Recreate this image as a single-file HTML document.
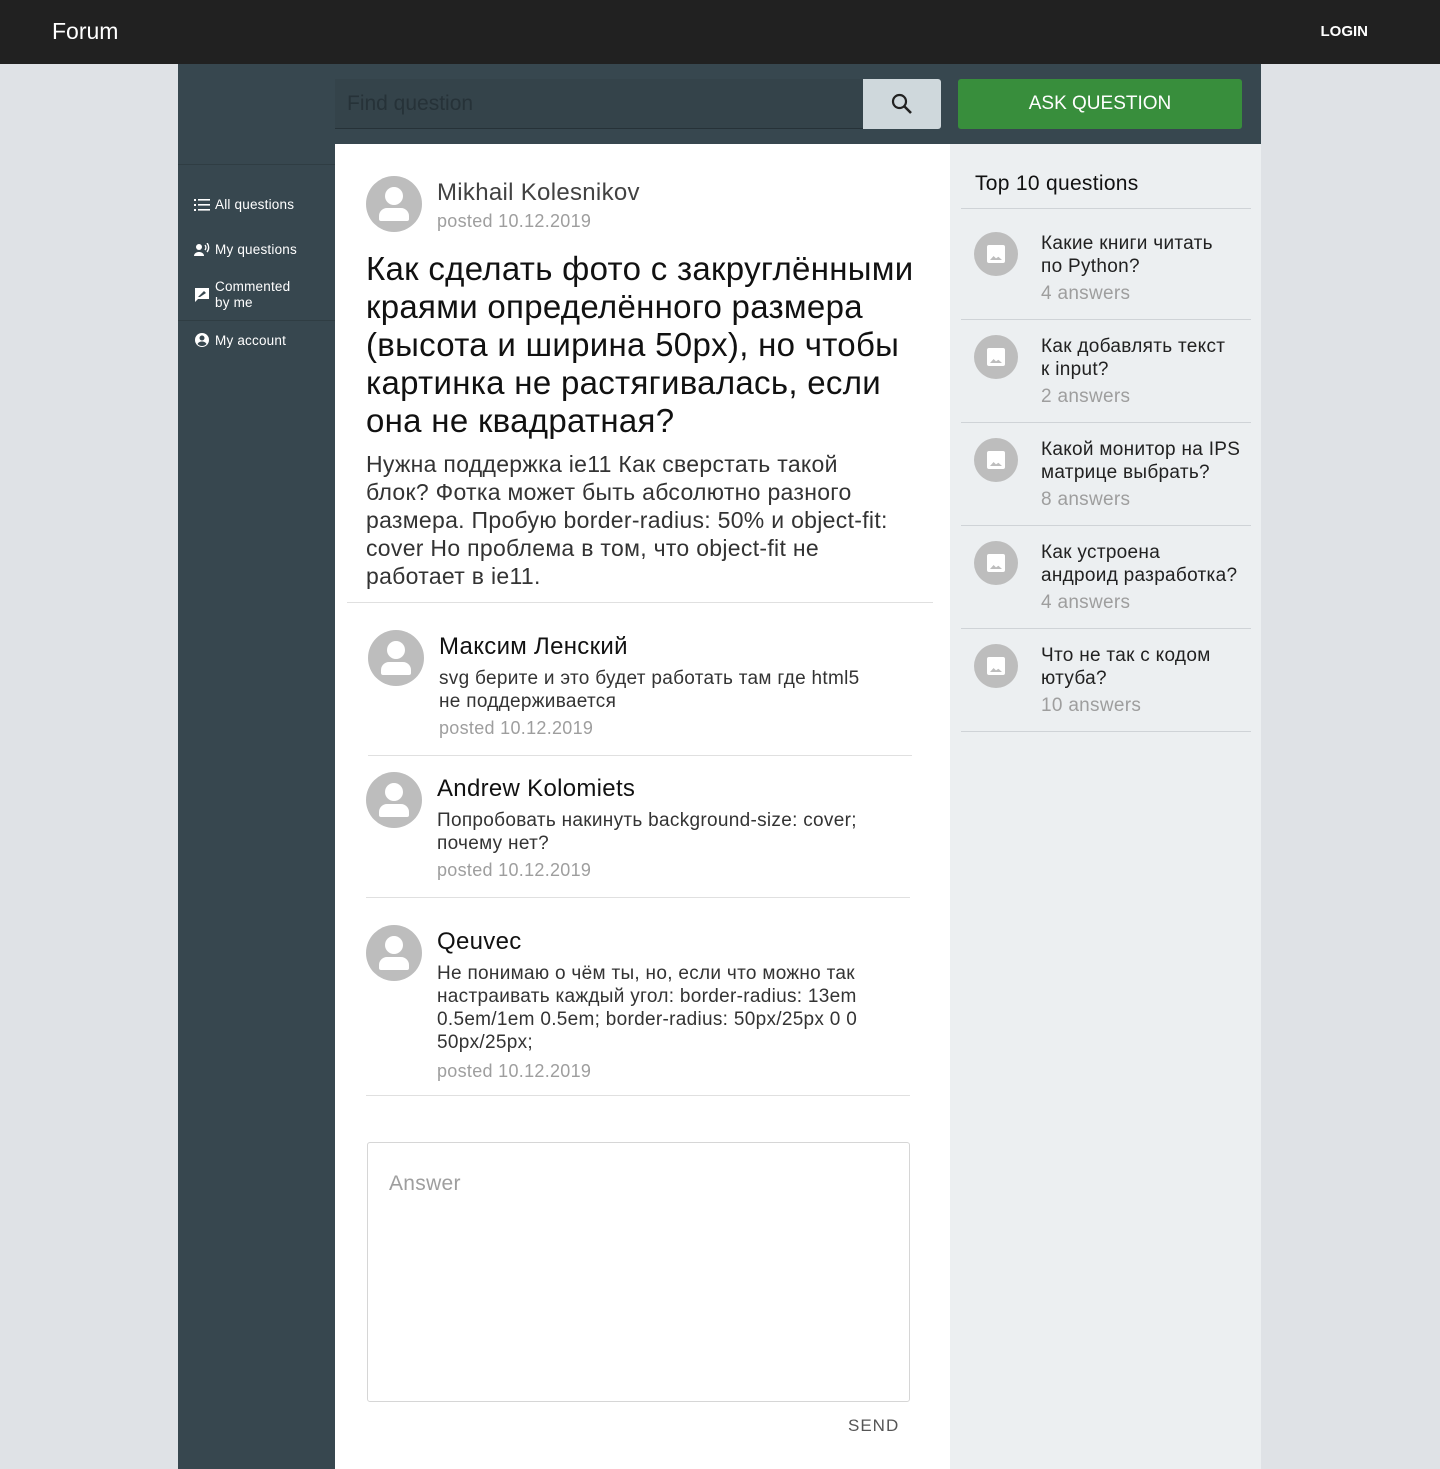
<!DOCTYPE html>
<html><head><meta charset="utf-8"><style>
*{box-sizing:border-box;margin:0;padding:0}
body{width:1440px;height:1469px;background:#dfe2e6;font-family:"Liberation Sans","Noto Sans CJK SC",sans-serif;position:relative;overflow:hidden;color:#212121}
.hdr{position:absolute;left:0;top:0;width:1440px;height:64px;background:#212121;color:#fff}
.hdr .t{position:absolute;left:52px;top:18px;font-size:23px}
.hdr .l{position:absolute;right:72px;top:23px;font-size:15px;font-weight:bold}
.side{position:absolute;left:178px;top:64px;width:157px;height:1405px;background:#37474f;color:#fff}
.top{position:absolute;left:335px;top:64px;width:926px;height:80px;background:#37474f}
.srch{position:absolute;left:335px;top:79px;width:528px;height:50px;background:#34434a;border-bottom:1px solid #263238;color:#263238;font-size:21px;padding:13px 12px}
.sbtn{position:absolute;left:863px;top:79px;width:78px;height:50px;background:#cfd8dc;border-radius:0 3px 3px 0}
.ask{position:absolute;left:958px;top:79px;width:284px;height:50px;background:#388e3c;color:#fff;font-size:19px;text-align:center;line-height:50px;border-radius:3px}
.main{position:absolute;left:335px;top:144px;width:615px;height:1325px;background:#fff}
.right{position:absolute;left:950px;top:144px;width:311px;height:1325px;background:#eceff1}
.nav{position:absolute;left:16px;font-size:13.5px;display:flex;align-items:center;gap:5px;letter-spacing:0.2px}
.av{position:absolute;width:56px;height:56px;border-radius:50%;background:#bdbdbd;overflow:hidden}
.av:before{content:"";position:absolute;left:19px;top:11px;width:18px;height:18px;border-radius:50%;background:#fff}
.av:after{content:"";position:absolute;left:13px;top:32px;width:30px;height:13px;border-radius:8px 8px 2px 2px;background:#fff}
.abs{position:absolute}
.gray{color:#9e9e9e}
.hr{position:absolute;height:1px;background:#e0e0e0}
.ti{position:absolute;left:24px;width:44px;height:44px;border-radius:50%;background:#bdbdbd}
.ti:after{content:"";position:absolute;left:13px;top:13px;width:18px;height:18px;background:#fff;border-radius:2px}
.ti i{position:absolute;left:16px;top:24px;width:12px;height:4px;background:#bdbdbd;clip-path:polygon(0 100%,30% 0,50% 60%,70% 20%,100% 100%);z-index:2}
.tq{position:absolute;left:91px;font-size:19px;line-height:23px;color:#212121;width:230px;letter-spacing:0.3px;white-space:nowrap}
.tq span{display:block;color:#9e9e9e;margin-top:4px}
.rhr{position:absolute;left:11px;width:290px;height:1px;background:#cfd3d7}
.ls{letter-spacing:0.3px}
</style></head><body>
<div class="hdr"><div class="t">Forum</div><div class="l">LOGIN</div></div>
<div class="side">
<div class="abs" style="left:0;top:100px;width:157px;height:1px;background:#2f3d43"></div>
<div class="nav" style="top:133px"><svg width="16" height="14" viewBox="0 0 16 14"><g fill="#fff"><rect x="0" y="1" width="2" height="2"/><rect x="0" y="6" width="2" height="2"/><rect x="0" y="11" width="2" height="2"/><rect x="4" y="1" width="12" height="1.6"/><rect x="4" y="6" width="12" height="1.6"/><rect x="4" y="11" width="12" height="1.6"/></g></svg>All questions</div>
<div class="nav" style="top:178px"><svg width="16" height="13" viewBox="0 0 16 13"><circle cx="5" cy="4" r="3" fill="#fff"/><path d="M0 13c0-3 3-4 5-4s5 1 5 4z" fill="#fff"/><path d="M11 2a4 4 0 0 1 0 5M13 0a7 7 0 0 1 0 9" stroke="#fff" fill="none" stroke-width="1.4"/></svg>My questions</div>
<div class="nav" style="top:215px;line-height:16px"><svg width="16" height="16" viewBox="0 0 16 16"><path d="M1 1h14v11H4l-3 3z" fill="#fff"/><path d="M4 10l6-6 2 2-6 4z" fill="#37474f"/></svg><span>Commented<br>by me</span></div>
<div class="abs" style="left:0;top:256px;width:157px;height:1px;background:#2f3d43"></div>
<div class="nav" style="top:268px"><svg width="16" height="16" viewBox="0 0 16 16"><circle cx="8" cy="8" r="7" fill="#fff"/><circle cx="8" cy="6" r="2.5" fill="#37474f"/><path d="M3.5 12c1-2 3-2.5 4.5-2.5s3.5.5 4.5 2.5a6 6 0 0 1-9 0z" fill="#37474f"/></svg>My account</div>
</div>
<div class="top"></div>
<div class="srch">Find question</div>
<div class="sbtn"><svg style="position:absolute;left:27px;top:13px" width="24" height="24" viewBox="0 0 24 24"><circle cx="9.5" cy="9.5" r="6.5" stroke="#212121" stroke-width="2.2" fill="none"/><path d="M14 14l7 7" stroke="#212121" stroke-width="2.6"/></svg></div>
<div class="ask">ASK QUESTION</div>
<div class="main">
<div class="av" style="left:31px;top:32px"></div>
<div class="abs ls" style="left:102px;top:35px;font-size:24px;color:#424242">Mikhail Kolesnikov</div>
<div class="abs gray ls" style="left:102px;top:67px;font-size:18px">posted 10.12.2019</div>
<div class="abs ls" style="left:31px;top:106px;width:560px;font-size:33px;line-height:38px;color:#111">Как сделать фото с закруглёнными краями определённого размера (высота и ширина 50px), но чтобы картинка не растягивалась, если она не квадратная?</div>
<div class="abs ls" style="left:31px;top:306px;width:535px;font-size:23px;line-height:28px;color:#333">Нужна поддержка ie11 Как сверстать такой блок? Фотка может быть абсолютно разного размера. Пробую border-radius: 50% и object-fit: cover Но проблема в том, что object-fit не работает в ie11.</div>
<div class="hr" style="left:12px;top:458px;width:586px"></div>

<div class="av" style="left:33px;top:486px"></div>
<div class="abs ls" style="left:104px;top:489px;font-size:24px;color:#111">Максим Ленский</div>
<div class="abs ls" style="left:104px;top:523px;width:445px;font-size:19px;line-height:23px;color:#333">svg берите и это будет работать там где html5 не поддерживается</div>
<div class="abs gray ls" style="left:104px;top:574px;font-size:18px">posted 10.12.2019</div>
<div class="hr" style="left:33px;top:611px;width:544px"></div>

<div class="av" style="left:31px;top:628px"></div>
<div class="abs ls" style="left:102px;top:631px;font-size:24px;color:#111">Andrew Kolomiets</div>
<div class="abs ls" style="left:102px;top:665px;width:460px;font-size:19px;line-height:23px;color:#333">Попробовать накинуть background-size: cover; почему нет?</div>
<div class="abs gray ls" style="left:102px;top:716px;font-size:18px">posted 10.12.2019</div>
<div class="hr" style="left:31px;top:753px;width:544px"></div>

<div class="av" style="left:31px;top:781px"></div>
<div class="abs ls" style="left:102px;top:784px;font-size:24px;color:#111">Qeuvec</div>
<div class="abs ls" style="left:102px;top:818px;width:460px;font-size:19px;line-height:23px;color:#333">Не понимаю о чём ты, но, если что можно так настраивать каждый угол: border-radius: 13em 0.5em/1em 0.5em; border-radius: 50px/25px 0 0 50px/25px;</div>
<div class="abs gray ls" style="left:102px;top:917px;font-size:18px">posted 10.12.2019</div>
<div class="hr" style="left:31px;top:951px;width:544px"></div>

<div class="abs" style="left:32px;top:998px;width:543px;height:260px;border:1px solid #d6d6d6;border-radius:3px"></div>
<div class="abs gray ls" style="left:54px;top:1028px;font-size:21px">Answer</div>
<div class="abs" style="left:513px;top:1272px;font-size:17px;color:#555;letter-spacing:1px">SEND</div>
</div>
<div class="right">
<div class="abs ls" style="left:25px;top:28px;font-size:21px;color:#111">Top 10 questions</div>
<div class="rhr" style="top:64px"></div>
<div class="ti" style="top:88px"><i></i></div><div class="tq" style="top:88px">Какие книги читать<br>по Python?<span>4 answers</span></div>
<div class="rhr" style="top:175px"></div>
<div class="ti" style="top:191px"><i></i></div><div class="tq" style="top:191px">Как добавлять текст<br>к input?<span>2 answers</span></div>
<div class="rhr" style="top:278px"></div>
<div class="ti" style="top:294px"><i></i></div><div class="tq" style="top:294px">Какой монитор на IPS<br>матрице выбрать?<span>8 answers</span></div>
<div class="rhr" style="top:381px"></div>
<div class="ti" style="top:397px"><i></i></div><div class="tq" style="top:397px">Как устроена<br>андроид разработка?<span>4 answers</span></div>
<div class="rhr" style="top:484px"></div>
<div class="ti" style="top:500px"><i></i></div><div class="tq" style="top:500px">Что не так с кодом<br>ютуба?<span>10 answers</span></div>
<div class="rhr" style="top:587px"></div>
</div>
</body></html>
